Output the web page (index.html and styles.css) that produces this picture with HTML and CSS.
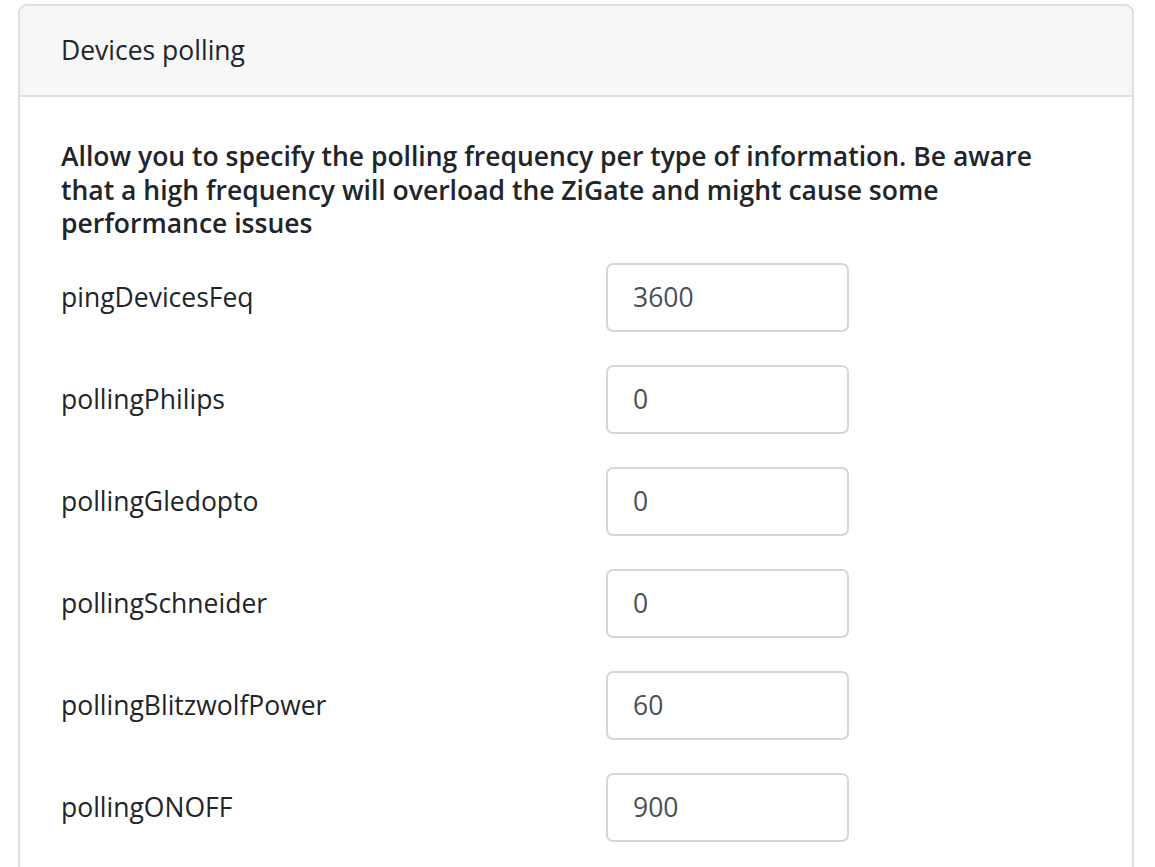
FILE: index.html
```html
<!DOCTYPE html>
<html>
<head>
<meta charset="utf-8">
<link rel="stylesheet" href="styles.css">
</head>
<body>
<div class="card">
  <div class="card-header">Devices polling</div>
  <div class="card-body">
    <h6 class="intro">Allow you to specify the polling frequency per type of information. Be aware that a high frequency will overload the ZiGate and might cause some performance issues</h6>
    <div class="row"><label class="lbl">pingDevicesFeq</label><input class="field" type="text" value="3600"></div>
    <div class="row"><label class="lbl">pollingPhilips</label><input class="field" type="text" value="0"></div>
    <div class="row"><label class="lbl">pollingGledopto</label><input class="field" type="text" value="0"></div>
    <div class="row"><label class="lbl">pollingSchneider</label><input class="field" type="text" value="0"></div>
    <div class="row"><label class="lbl">pollingBlitzwolfPower</label><input class="field" type="text" value="60"></div>
    <div class="row"><label class="lbl">pollingONOFF</label><input class="field" type="text" value="900"></div>
  </div>
</div>
</body>
</html>
```
FILE: styles.css
```css
html, body {
  margin: 0;
  padding: 0;
  background: #ffffff;
  font-family: "Open Sans", "Noto Sans", sans-serif;
  color: #212529;
}
.card {
  margin: 4px 0 0 18px;
  width: 1116px;
  box-sizing: border-box;
  border: 2px solid #dfdfdf;
  border-radius: 9px;
  overflow: hidden;
}
.card-header {
  background: #f7f7f7;
  border-bottom: 2px solid #dfdfdf;
  box-sizing: border-box;
  height: 91px;
  display: flex;
  align-items: center;
  padding-left: 41px;
  padding-bottom: 2px;
  font-size: 26.5px;
}
.card-body {
  padding: 43px 41px 0 41px;
}
.intro {
  margin: 0 0 22px 0;
  font-size: 26.5px;
  line-height: 33.6px;
  font-weight: 600;
}
.row {
  display: grid;
  grid-template-columns: 545px 243px;
  align-items: center;
  margin-bottom: 33px;
}
.lbl {
  font-size: 26.5px;
}
.field {
  box-sizing: border-box;
  width: 243px;
  height: 69px;
  border: 2px solid #d3d7dc;
  border-radius: 7px;
  padding: 0 25px;
  font-family: inherit;
  font-size: 26.5px;
  color: #495057;
  background: #fff;
  outline: none;
}
```
